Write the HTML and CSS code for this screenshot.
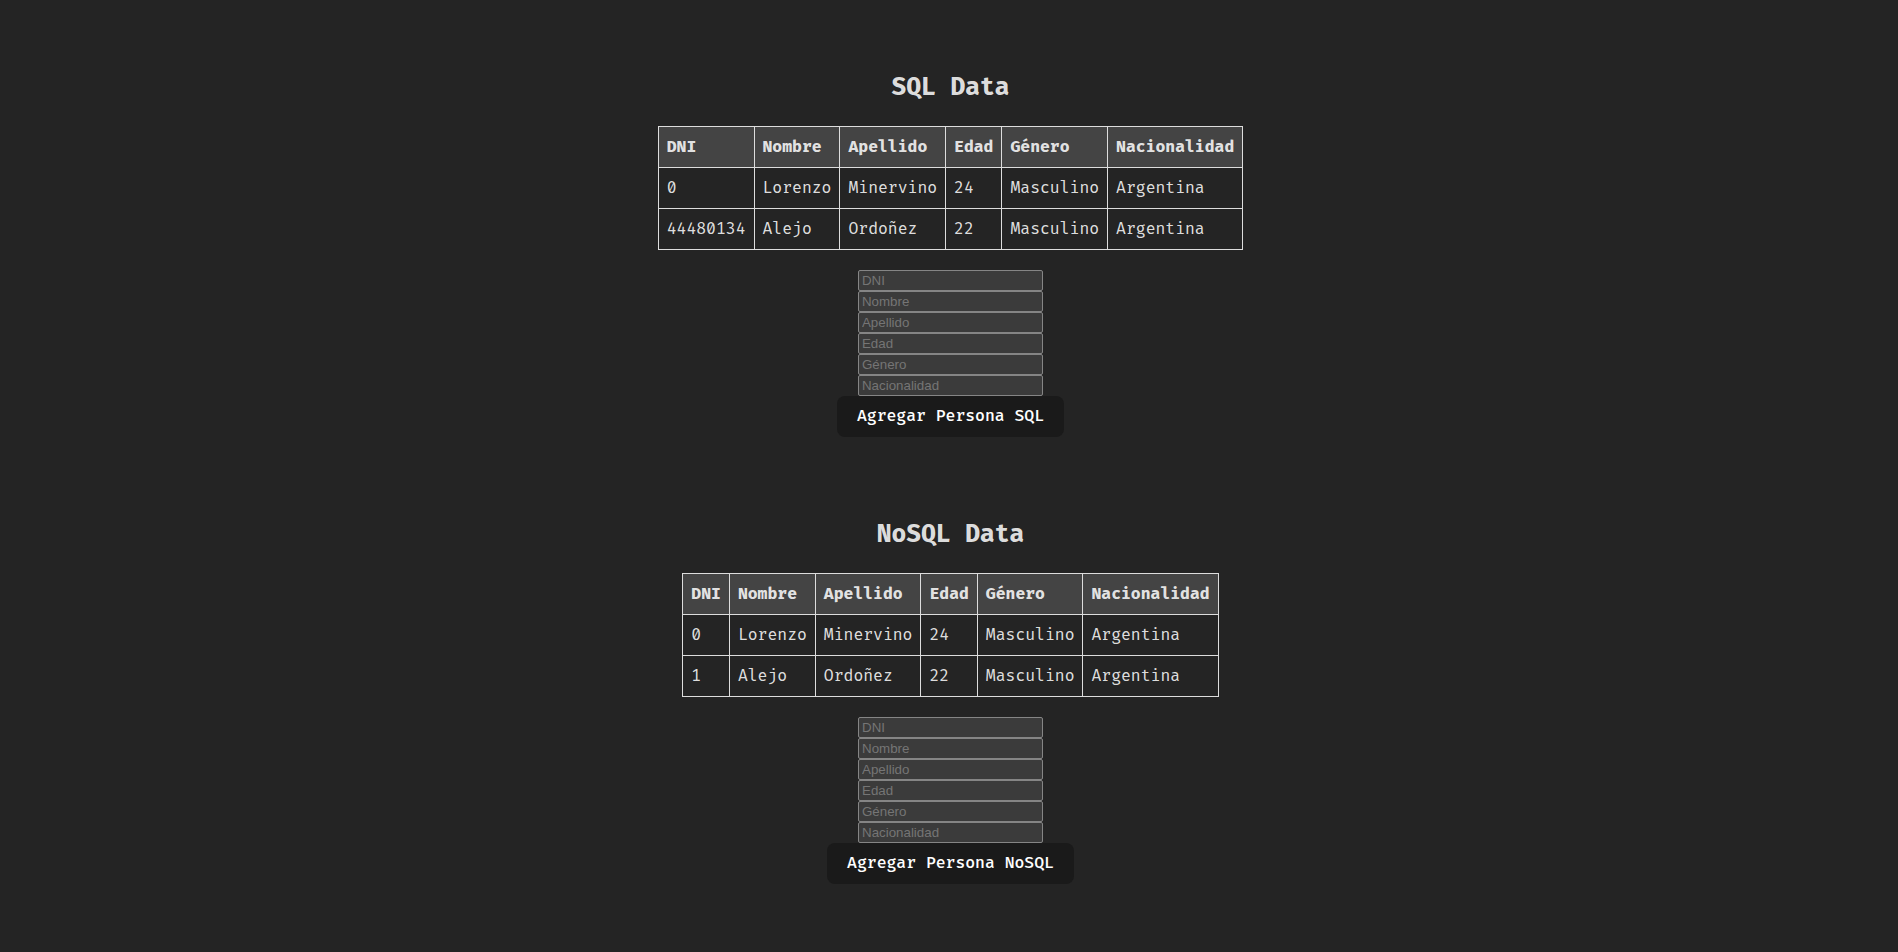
FILE: index.html
```html
<!DOCTYPE html>
<html lang="es">
<head>
<meta charset="utf-8">
<meta name="viewport" content="width=device-width, initial-scale=1">
<title>SQL Data / NoSQL Data</title>
<link rel="stylesheet" href="styles.css">
</head>
<body>
<main class="page">
  <section class="panel">
    <h2 class="title">SQL Data</h2>
    <table class="people">
      <thead>
        <tr><th>DNI</th><th>Nombre</th><th>Apellido</th><th>Edad</th><th>Género</th><th>Nacionalidad</th></tr>
      </thead>
      <tbody>
        <tr><td>0</td><td>Lorenzo</td><td>Minervino</td><td>24</td><td>Masculino</td><td>Argentina</td></tr>
        <tr><td>44480134</td><td>Alejo</td><td>Ordoñez</td><td>22</td><td>Masculino</td><td>Argentina</td></tr>
      </tbody>
    </table>
    <form class="form">
      <input class="field" type="text" placeholder="DNI" aria-label="DNI">
      <input class="field" type="text" placeholder="Nombre" aria-label="Nombre">
      <input class="field" type="text" placeholder="Apellido" aria-label="Apellido">
      <input class="field" type="text" placeholder="Edad" aria-label="Edad">
      <input class="field" type="text" placeholder="Género" aria-label="Género">
      <input class="field" type="text" placeholder="Nacionalidad" aria-label="Nacionalidad">
      <button class="submit" type="button">Agregar Persona SQL</button>
    </form>
  </section>
  <section class="panel">
    <h2 class="title">NoSQL Data</h2>
    <table class="people">
      <thead>
        <tr><th>DNI</th><th>Nombre</th><th>Apellido</th><th>Edad</th><th>Género</th><th>Nacionalidad</th></tr>
      </thead>
      <tbody>
        <tr><td>0</td><td>Lorenzo</td><td>Minervino</td><td>24</td><td>Masculino</td><td>Argentina</td></tr>
        <tr><td>1</td><td>Alejo</td><td>Ordoñez</td><td>22</td><td>Masculino</td><td>Argentina</td></tr>
      </tbody>
    </table>
    <form class="form">
      <input class="field" type="text" placeholder="DNI" aria-label="DNI">
      <input class="field" type="text" placeholder="Nombre" aria-label="Nombre">
      <input class="field" type="text" placeholder="Apellido" aria-label="Apellido">
      <input class="field" type="text" placeholder="Edad" aria-label="Edad">
      <input class="field" type="text" placeholder="Género" aria-label="Género">
      <input class="field" type="text" placeholder="Nacionalidad" aria-label="Nacionalidad">
      <button class="submit" type="button">Agregar Persona NoSQL</button>
    </form>
  </section>
</main>
</body>
</html>
```
FILE: styles.css
```css
:root {
  color-scheme: dark;
}

* {
  box-sizing: border-box;
}

body {
  margin: 0;
  background: #242424;
  color: rgba(255, 255, 255, 0.87);
  font-family: "Fira Code", "DejaVu Sans Mono", monospace;
  font-size: 16px;
  line-height: 24px;
}

.page {
  display: flex;
  flex-direction: column;
  align-items: center;
  justify-content: center;
  gap: 80px;
  min-height: 100vh;
  padding: 34px 0 32px 3px;
}

.panel {
  display: flex;
  flex-direction: column;
  align-items: center;
  gap: 20px;
}

.title {
  margin: 0;
  font-size: 24px;
  line-height: 36px;
  font-weight: 700;
}

.people {
  border-collapse: collapse;
}

.people th,
.people td {
  padding: 8px;
  border: 1px solid #dddddd;
  text-align: left;
}

.people th {
  background: #444444;
  font-weight: 700;
}

.form {
  display: flex;
  flex-direction: column;
  align-items: center;
}

.field {
  width: 185px;
  height: 21px;
  margin: 0;
  padding: 1px 3px;
  border: 1px solid #858585;
  border-radius: 2px;
  background: #3b3b3b;
  color: #ffffff;
  font-family: "Liberation Sans", Arial, sans-serif;
}

.field::placeholder {
  color: #757575;
}

.submit {
  height: 41px;
  padding: 0 20px 2px;
  border: 0;
  border-radius: 8px;
  background: #1a1a1a;
  color: #ffffff;
  font: inherit;
  font-weight: 500;
  cursor: pointer;
}
```
